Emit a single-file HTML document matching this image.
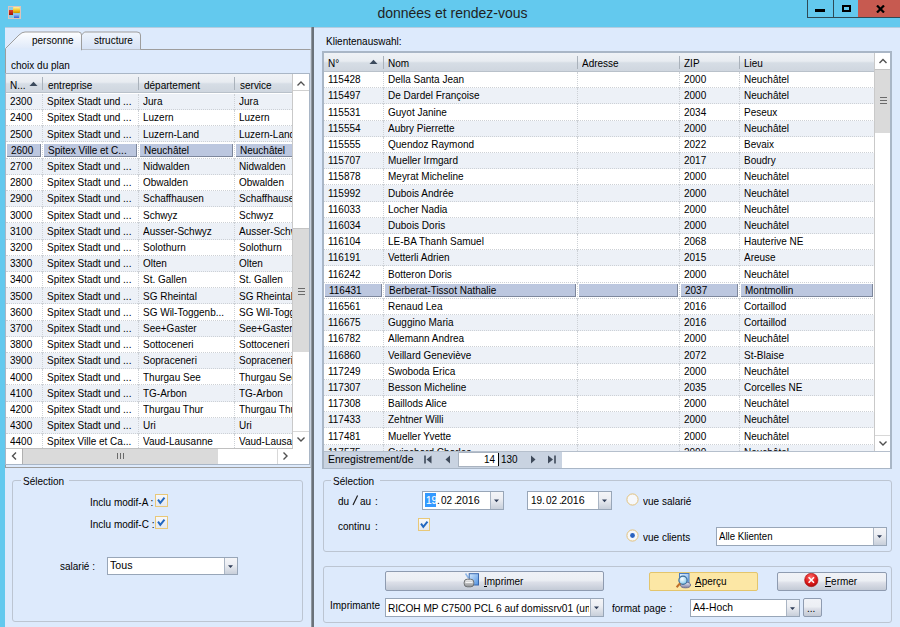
<!DOCTYPE html><html><head><meta charset="utf-8"><style>
html,body{margin:0;padding:0;width:900px;height:627px;overflow:hidden;background:#ddeafc}
#r{position:relative;width:900px;height:627px;overflow:hidden;font-family:"Liberation Sans", sans-serif;color:#000}
.tx{position:absolute;white-space:nowrap;line-height:1;transform:scaleX(0.893);transform-origin:0 0}
</style></head><body><div id="r"><div style="position:absolute;left:0px;top:0px;width:900px;height:27px;background:#63c9ee"></div><div style="position:absolute;left:0px;top:27px;width:5px;height:600px;background:#63c9ee"></div><div style="position:absolute;left:5px;top:27px;width:895px;height:600px;background:#ddeafc"></div><div style="position:absolute;left:5px;top:27px;width:895px;height:1px;background:#b4cde0"></div><div style="position:absolute;left:8px;top:6px;width:13px;height:13px;border:1px solid #dcc4bc;box-sizing:border-box;background:#86cdea"></div><div style="position:absolute;left:13px;top:6.5px;width:7px;height:6.5px;background:linear-gradient(#fff2a0,#f0c020 60%,#c89000);border-radius:1px"></div><div style="position:absolute;left:8.5px;top:10px;width:4px;height:5px;background:linear-gradient(#e04030,#a01000)"></div><div style="position:absolute;left:13.5px;top:14.2px;width:5px;height:3.6px;background:linear-gradient(#a8c8ff,#3060d0)"></div><div style="position:absolute;white-space:nowrap;line-height:1;left:0;width:905px;text-align:center;top:6px;font-size:14px;color:#1f1f1f">données et rendez-vous</div><div style="position:absolute;left:807px;top:0px;width:26px;height:18px;border-left:1px solid #2e4a55;border-bottom:1px solid #2e4a55;box-sizing:border-box;background:#63c9ee"></div><div style="position:absolute;left:833px;top:0px;width:25px;height:18px;border-left:1px solid #2e4a55;border-bottom:1px solid #2e4a55;box-sizing:border-box;background:#63c9ee"></div><div style="position:absolute;left:858px;top:0px;width:42px;height:18px;border-bottom:1px solid #2e4a55;box-sizing:border-box;background:#c75a50"></div><div style="position:absolute;left:815px;top:9.3px;width:10px;height:2.8px;background:#000"></div><div style="position:absolute;left:841.8px;top:4.8px;width:9.6px;height:7.4px;border:2px solid #000;border-top-width:2.6px;box-sizing:border-box"></div><svg style="position:absolute;left:876px;top:5px" width="9" height="8" viewBox="0 0 9 8"><path d="M1 0.5 L8 7.5 M8 0.5 L1 7.5" stroke="#000" stroke-width="2.2"/></svg><div style="position:absolute;left:5px;top:49px;width:306px;height:419px;border:1px solid #9d9d9d;border-right:1px solid #c8d2e0;box-sizing:border-box;background:#ddeafc"></div><svg style="position:absolute;left:0;top:27px" width="320" height="24" viewBox="0 27 320 24">
<defs><linearGradient id="ga" x1="0" y1="0" x2="0" y2="1"><stop offset="0" stop-color="#fdfeff"/><stop offset="1" stop-color="#dde8f9"/></linearGradient>
<linearGradient id="gb" x1="0" y1="0" x2="0" y2="1"><stop offset="0" stop-color="#eef4fd"/><stop offset="1" stop-color="#d6e2f5"/></linearGradient></defs>
<path d="M81.5 49.5 L81.5 35 L84.5 32 L137 32 Q140.5 32 140.5 35 L140.5 49.5" fill="url(#gb)" stroke="#9d9d9d" stroke-width="1"/>
<path d="M5.5 50 L5.5 48.5 L19 35 Q22 32 25 32 L78.5 32 Q81.5 32 81.5 35 L81.5 50 Z" fill="url(#ga)" stroke="#9d9d9d" stroke-width="1"/>
<rect x="6" y="48.6" width="75" height="3" fill="#ddeafc"/>
</svg><div class="tx" style="left:31.5px;top:34.52px;font-size:11.20px;">personne</div><div class="tx" style="left:94px;top:34.52px;font-size:11.20px;">structure</div><div class="tx" style="left:11px;top:59.82px;font-size:11.20px;">choix du plan</div><div style="position:absolute;left:5px;top:73px;width:305px;height:392px;border:1px solid #a9b6c6;box-sizing:border-box;background:#fff"></div><div style="position:absolute;left:6px;top:74px;width:286px;height:374px;overflow:hidden"><div style="position:absolute;left:0px;top:0px;width:286px;height:19px;background:linear-gradient(#eff2f6 0%,#e8ecf1 45%,#d6dde5 55%,#cfd6df 100%);border-bottom:1px solid #b9c1ca;box-sizing:border-box"></div><div style="position:absolute;left:36px;top:3px;width:1px;height:13px;background:#aab2bb"></div><div style="position:absolute;left:132px;top:3px;width:1px;height:13px;background:#aab2bb"></div><div style="position:absolute;left:228px;top:3px;width:1px;height:13px;background:#aab2bb"></div><div class="tx" style="left:4px;top:5.72px;font-size:11.20px;">N...</div><div class="tx" style="left:42px;top:5.72px;font-size:11.20px;">entreprise</div><div class="tx" style="left:137.5px;top:5.72px;font-size:11.20px;">département</div><div class="tx" style="left:233.5px;top:5.72px;font-size:11.20px;">service</div><svg style="position:absolute;left:23px;top:7px" width="9" height="6"><path d="M0.5 5 L4.5 0.8 L8.5 5 Z" fill="#3b4a5c"/></svg><div style="position:absolute;left:0px;top:19.799999999999997px;width:286px;height:16.2px;background:#edf1f7;border-bottom:1px dotted #cdd1d6;box-sizing:border-box"></div><div class="tx" style="left:4px;top:22.12px;font-size:11.20px;width:35.8px;overflow:hidden">2300</div><div style="position:absolute;left:36px;top:19.799999999999997px;width:0px;height:16.2px;border-left:1px dotted #cdd1d6"></div><div class="tx" style="left:41px;top:22.12px;font-size:11.20px;width:101.9px;overflow:hidden">Spitex Stadt und ...</div><div style="position:absolute;left:132px;top:19.799999999999997px;width:0px;height:16.2px;border-left:1px dotted #cdd1d6"></div><div class="tx" style="left:137px;top:22.12px;font-size:11.20px;width:101.9px;overflow:hidden">Jura</div><div style="position:absolute;left:228px;top:19.799999999999997px;width:0px;height:16.2px;border-left:1px dotted #cdd1d6"></div><div class="tx" style="left:233px;top:22.12px;font-size:11.20px;">Jura</div><div style="position:absolute;left:0px;top:36.0px;width:286px;height:16.2px;background:#fff;border-bottom:1px dotted #cdd1d6;box-sizing:border-box"></div><div class="tx" style="left:4px;top:38.32px;font-size:11.20px;width:35.8px;overflow:hidden">2400</div><div style="position:absolute;left:36px;top:36.0px;width:0px;height:16.2px;border-left:1px dotted #cdd1d6"></div><div class="tx" style="left:41px;top:38.32px;font-size:11.20px;width:101.9px;overflow:hidden">Spitex Stadt und ...</div><div style="position:absolute;left:132px;top:36.0px;width:0px;height:16.2px;border-left:1px dotted #cdd1d6"></div><div class="tx" style="left:137px;top:38.32px;font-size:11.20px;width:101.9px;overflow:hidden">Luzern</div><div style="position:absolute;left:228px;top:36.0px;width:0px;height:16.2px;border-left:1px dotted #cdd1d6"></div><div class="tx" style="left:233px;top:38.32px;font-size:11.20px;">Luzern</div><div style="position:absolute;left:0px;top:52.19999999999999px;width:286px;height:16.2px;background:#edf1f7;border-bottom:1px dotted #cdd1d6;box-sizing:border-box"></div><div class="tx" style="left:4px;top:54.52px;font-size:11.20px;width:35.8px;overflow:hidden">2500</div><div style="position:absolute;left:36px;top:52.19999999999999px;width:0px;height:16.2px;border-left:1px dotted #cdd1d6"></div><div class="tx" style="left:41px;top:54.52px;font-size:11.20px;width:101.9px;overflow:hidden">Spitex Stadt und ...</div><div style="position:absolute;left:132px;top:52.19999999999999px;width:0px;height:16.2px;border-left:1px dotted #cdd1d6"></div><div class="tx" style="left:137px;top:54.52px;font-size:11.20px;width:101.9px;overflow:hidden">Luzern-Land</div><div style="position:absolute;left:228px;top:52.19999999999999px;width:0px;height:16.2px;border-left:1px dotted #cdd1d6"></div><div class="tx" style="left:233px;top:54.52px;font-size:11.20px;">Luzern-Land</div><div style="position:absolute;left:0px;top:68.39999999999998px;width:286px;height:16.2px;background:#fff;border-bottom:1px dotted #cdd1d6;box-sizing:border-box"></div><div style="position:absolute;left:1px;top:69.59999999999998px;width:34px;height:13.2px;background:#bcc7df;border-right:1px solid #7d879c;border-bottom:1px solid #7d879c;box-sizing:border-box"></div><div style="position:absolute;left:38px;top:69.59999999999998px;width:93px;height:13.2px;background:#bcc7df;border-right:1px solid #7d879c;border-bottom:1px solid #7d879c;box-sizing:border-box"></div><div style="position:absolute;left:134px;top:69.59999999999998px;width:93px;height:13.2px;background:#bcc7df;border-right:1px solid #7d879c;border-bottom:1px solid #7d879c;box-sizing:border-box"></div><div style="position:absolute;left:230px;top:69.59999999999998px;width:61px;height:13.2px;background:#bcc7df;border-right:1px solid #7d879c;border-bottom:1px solid #7d879c;box-sizing:border-box"></div><div class="tx" style="left:5px;top:71.32px;font-size:11.20px;width:35.8px;overflow:hidden">2600</div><div style="position:absolute;left:36px;top:68.39999999999998px;width:0px;height:16.2px;border-left:1px dotted #cdd1d6"></div><div class="tx" style="left:42px;top:71.32px;font-size:11.20px;width:101.9px;overflow:hidden">Spitex Ville et C...</div><div style="position:absolute;left:132px;top:68.39999999999998px;width:0px;height:16.2px;border-left:1px dotted #cdd1d6"></div><div class="tx" style="left:138px;top:71.32px;font-size:11.20px;width:101.9px;overflow:hidden">Neuchâtel</div><div style="position:absolute;left:228px;top:68.39999999999998px;width:0px;height:16.2px;border-left:1px dotted #cdd1d6"></div><div class="tx" style="left:234px;top:71.32px;font-size:11.20px;">Neuchâtel</div><div style="position:absolute;left:0px;top:84.6px;width:286px;height:16.2px;background:#edf1f7;border-bottom:1px dotted #cdd1d6;box-sizing:border-box"></div><div class="tx" style="left:4px;top:86.92px;font-size:11.20px;width:35.8px;overflow:hidden">2700</div><div style="position:absolute;left:36px;top:84.6px;width:0px;height:16.2px;border-left:1px dotted #cdd1d6"></div><div class="tx" style="left:41px;top:86.92px;font-size:11.20px;width:101.9px;overflow:hidden">Spitex Stadt und ...</div><div style="position:absolute;left:132px;top:84.6px;width:0px;height:16.2px;border-left:1px dotted #cdd1d6"></div><div class="tx" style="left:137px;top:86.92px;font-size:11.20px;width:101.9px;overflow:hidden">Nidwalden</div><div style="position:absolute;left:228px;top:84.6px;width:0px;height:16.2px;border-left:1px dotted #cdd1d6"></div><div class="tx" style="left:233px;top:86.92px;font-size:11.20px;">Nidwalden</div><div style="position:absolute;left:0px;top:100.80000000000001px;width:286px;height:16.2px;background:#fff;border-bottom:1px dotted #cdd1d6;box-sizing:border-box"></div><div class="tx" style="left:4px;top:103.12px;font-size:11.20px;width:35.8px;overflow:hidden">2800</div><div style="position:absolute;left:36px;top:100.80000000000001px;width:0px;height:16.2px;border-left:1px dotted #cdd1d6"></div><div class="tx" style="left:41px;top:103.12px;font-size:11.20px;width:101.9px;overflow:hidden">Spitex Stadt und ...</div><div style="position:absolute;left:132px;top:100.80000000000001px;width:0px;height:16.2px;border-left:1px dotted #cdd1d6"></div><div class="tx" style="left:137px;top:103.12px;font-size:11.20px;width:101.9px;overflow:hidden">Obwalden</div><div style="position:absolute;left:228px;top:100.80000000000001px;width:0px;height:16.2px;border-left:1px dotted #cdd1d6"></div><div class="tx" style="left:233px;top:103.12px;font-size:11.20px;">Obwalden</div><div style="position:absolute;left:0px;top:117.0px;width:286px;height:16.2px;background:#edf1f7;border-bottom:1px dotted #cdd1d6;box-sizing:border-box"></div><div class="tx" style="left:4px;top:119.32px;font-size:11.20px;width:35.8px;overflow:hidden">2900</div><div style="position:absolute;left:36px;top:117.0px;width:0px;height:16.2px;border-left:1px dotted #cdd1d6"></div><div class="tx" style="left:41px;top:119.32px;font-size:11.20px;width:101.9px;overflow:hidden">Spitex Stadt und ...</div><div style="position:absolute;left:132px;top:117.0px;width:0px;height:16.2px;border-left:1px dotted #cdd1d6"></div><div class="tx" style="left:137px;top:119.32px;font-size:11.20px;width:101.9px;overflow:hidden">Schaffhausen</div><div style="position:absolute;left:228px;top:117.0px;width:0px;height:16.2px;border-left:1px dotted #cdd1d6"></div><div class="tx" style="left:233px;top:119.32px;font-size:11.20px;">Schaffhausen</div><div style="position:absolute;left:0px;top:133.2px;width:286px;height:16.2px;background:#fff;border-bottom:1px dotted #cdd1d6;box-sizing:border-box"></div><div class="tx" style="left:4px;top:135.52px;font-size:11.20px;width:35.8px;overflow:hidden">3000</div><div style="position:absolute;left:36px;top:133.2px;width:0px;height:16.2px;border-left:1px dotted #cdd1d6"></div><div class="tx" style="left:41px;top:135.52px;font-size:11.20px;width:101.9px;overflow:hidden">Spitex Stadt und ...</div><div style="position:absolute;left:132px;top:133.2px;width:0px;height:16.2px;border-left:1px dotted #cdd1d6"></div><div class="tx" style="left:137px;top:135.52px;font-size:11.20px;width:101.9px;overflow:hidden">Schwyz</div><div style="position:absolute;left:228px;top:133.2px;width:0px;height:16.2px;border-left:1px dotted #cdd1d6"></div><div class="tx" style="left:233px;top:135.52px;font-size:11.20px;">Schwyz</div><div style="position:absolute;left:0px;top:149.39999999999998px;width:286px;height:16.2px;background:#edf1f7;border-bottom:1px dotted #cdd1d6;box-sizing:border-box"></div><div class="tx" style="left:4px;top:151.72px;font-size:11.20px;width:35.8px;overflow:hidden">3100</div><div style="position:absolute;left:36px;top:149.39999999999998px;width:0px;height:16.2px;border-left:1px dotted #cdd1d6"></div><div class="tx" style="left:41px;top:151.72px;font-size:11.20px;width:101.9px;overflow:hidden">Spitex Stadt und ...</div><div style="position:absolute;left:132px;top:149.39999999999998px;width:0px;height:16.2px;border-left:1px dotted #cdd1d6"></div><div class="tx" style="left:137px;top:151.72px;font-size:11.20px;width:101.9px;overflow:hidden">Ausser-Schwyz</div><div style="position:absolute;left:228px;top:149.39999999999998px;width:0px;height:16.2px;border-left:1px dotted #cdd1d6"></div><div class="tx" style="left:233px;top:151.72px;font-size:11.20px;">Ausser-Schwyz</div><div style="position:absolute;left:0px;top:165.59999999999997px;width:286px;height:16.2px;background:#fff;border-bottom:1px dotted #cdd1d6;box-sizing:border-box"></div><div class="tx" style="left:4px;top:167.92px;font-size:11.20px;width:35.8px;overflow:hidden">3200</div><div style="position:absolute;left:36px;top:165.59999999999997px;width:0px;height:16.2px;border-left:1px dotted #cdd1d6"></div><div class="tx" style="left:41px;top:167.92px;font-size:11.20px;width:101.9px;overflow:hidden">Spitex Stadt und ...</div><div style="position:absolute;left:132px;top:165.59999999999997px;width:0px;height:16.2px;border-left:1px dotted #cdd1d6"></div><div class="tx" style="left:137px;top:167.92px;font-size:11.20px;width:101.9px;overflow:hidden">Solothurn</div><div style="position:absolute;left:228px;top:165.59999999999997px;width:0px;height:16.2px;border-left:1px dotted #cdd1d6"></div><div class="tx" style="left:233px;top:167.92px;font-size:11.20px;">Solothurn</div><div style="position:absolute;left:0px;top:181.8px;width:286px;height:16.2px;background:#edf1f7;border-bottom:1px dotted #cdd1d6;box-sizing:border-box"></div><div class="tx" style="left:4px;top:184.12px;font-size:11.20px;width:35.8px;overflow:hidden">3300</div><div style="position:absolute;left:36px;top:181.8px;width:0px;height:16.2px;border-left:1px dotted #cdd1d6"></div><div class="tx" style="left:41px;top:184.12px;font-size:11.20px;width:101.9px;overflow:hidden">Spitex Stadt und ...</div><div style="position:absolute;left:132px;top:181.8px;width:0px;height:16.2px;border-left:1px dotted #cdd1d6"></div><div class="tx" style="left:137px;top:184.12px;font-size:11.20px;width:101.9px;overflow:hidden">Olten</div><div style="position:absolute;left:228px;top:181.8px;width:0px;height:16.2px;border-left:1px dotted #cdd1d6"></div><div class="tx" style="left:233px;top:184.12px;font-size:11.20px;">Olten</div><div style="position:absolute;left:0px;top:198.0px;width:286px;height:16.2px;background:#fff;border-bottom:1px dotted #cdd1d6;box-sizing:border-box"></div><div class="tx" style="left:4px;top:200.32px;font-size:11.20px;width:35.8px;overflow:hidden">3400</div><div style="position:absolute;left:36px;top:198.0px;width:0px;height:16.2px;border-left:1px dotted #cdd1d6"></div><div class="tx" style="left:41px;top:200.32px;font-size:11.20px;width:101.9px;overflow:hidden">Spitex Stadt und ...</div><div style="position:absolute;left:132px;top:198.0px;width:0px;height:16.2px;border-left:1px dotted #cdd1d6"></div><div class="tx" style="left:137px;top:200.32px;font-size:11.20px;width:101.9px;overflow:hidden">St. Gallen</div><div style="position:absolute;left:228px;top:198.0px;width:0px;height:16.2px;border-left:1px dotted #cdd1d6"></div><div class="tx" style="left:233px;top:200.32px;font-size:11.20px;">St. Gallen</div><div style="position:absolute;left:0px;top:214.2px;width:286px;height:16.2px;background:#edf1f7;border-bottom:1px dotted #cdd1d6;box-sizing:border-box"></div><div class="tx" style="left:4px;top:216.52px;font-size:11.20px;width:35.8px;overflow:hidden">3500</div><div style="position:absolute;left:36px;top:214.2px;width:0px;height:16.2px;border-left:1px dotted #cdd1d6"></div><div class="tx" style="left:41px;top:216.52px;font-size:11.20px;width:101.9px;overflow:hidden">Spitex Stadt und ...</div><div style="position:absolute;left:132px;top:214.2px;width:0px;height:16.2px;border-left:1px dotted #cdd1d6"></div><div class="tx" style="left:137px;top:216.52px;font-size:11.20px;width:101.9px;overflow:hidden">SG Rheintal</div><div style="position:absolute;left:228px;top:214.2px;width:0px;height:16.2px;border-left:1px dotted #cdd1d6"></div><div class="tx" style="left:233px;top:216.52px;font-size:11.20px;">SG Rheintal</div><div style="position:absolute;left:0px;top:230.39999999999998px;width:286px;height:16.2px;background:#fff;border-bottom:1px dotted #cdd1d6;box-sizing:border-box"></div><div class="tx" style="left:4px;top:232.72px;font-size:11.20px;width:35.8px;overflow:hidden">3600</div><div style="position:absolute;left:36px;top:230.39999999999998px;width:0px;height:16.2px;border-left:1px dotted #cdd1d6"></div><div class="tx" style="left:41px;top:232.72px;font-size:11.20px;width:101.9px;overflow:hidden">Spitex Stadt und ...</div><div style="position:absolute;left:132px;top:230.39999999999998px;width:0px;height:16.2px;border-left:1px dotted #cdd1d6"></div><div class="tx" style="left:137px;top:232.72px;font-size:11.20px;width:101.9px;overflow:hidden">SG Wil-Toggenb...</div><div style="position:absolute;left:228px;top:230.39999999999998px;width:0px;height:16.2px;border-left:1px dotted #cdd1d6"></div><div class="tx" style="left:233px;top:232.72px;font-size:11.20px;">SG Wil-Toggenburg</div><div style="position:absolute;left:0px;top:246.59999999999997px;width:286px;height:16.2px;background:#edf1f7;border-bottom:1px dotted #cdd1d6;box-sizing:border-box"></div><div class="tx" style="left:4px;top:248.92px;font-size:11.20px;width:35.8px;overflow:hidden">3700</div><div style="position:absolute;left:36px;top:246.59999999999997px;width:0px;height:16.2px;border-left:1px dotted #cdd1d6"></div><div class="tx" style="left:41px;top:248.92px;font-size:11.20px;width:101.9px;overflow:hidden">Spitex Stadt und ...</div><div style="position:absolute;left:132px;top:246.59999999999997px;width:0px;height:16.2px;border-left:1px dotted #cdd1d6"></div><div class="tx" style="left:137px;top:248.92px;font-size:11.20px;width:101.9px;overflow:hidden">See+Gaster</div><div style="position:absolute;left:228px;top:246.59999999999997px;width:0px;height:16.2px;border-left:1px dotted #cdd1d6"></div><div class="tx" style="left:233px;top:248.92px;font-size:11.20px;">See+Gaster</div><div style="position:absolute;left:0px;top:262.8px;width:286px;height:16.2px;background:#fff;border-bottom:1px dotted #cdd1d6;box-sizing:border-box"></div><div class="tx" style="left:4px;top:265.12px;font-size:11.20px;width:35.8px;overflow:hidden">3800</div><div style="position:absolute;left:36px;top:262.8px;width:0px;height:16.2px;border-left:1px dotted #cdd1d6"></div><div class="tx" style="left:41px;top:265.12px;font-size:11.20px;width:101.9px;overflow:hidden">Spitex Stadt und ...</div><div style="position:absolute;left:132px;top:262.8px;width:0px;height:16.2px;border-left:1px dotted #cdd1d6"></div><div class="tx" style="left:137px;top:265.12px;font-size:11.20px;width:101.9px;overflow:hidden">Sottoceneri</div><div style="position:absolute;left:228px;top:262.8px;width:0px;height:16.2px;border-left:1px dotted #cdd1d6"></div><div class="tx" style="left:233px;top:265.12px;font-size:11.20px;">Sottoceneri</div><div style="position:absolute;left:0px;top:279.0px;width:286px;height:16.2px;background:#edf1f7;border-bottom:1px dotted #cdd1d6;box-sizing:border-box"></div><div class="tx" style="left:4px;top:281.32px;font-size:11.20px;width:35.8px;overflow:hidden">3900</div><div style="position:absolute;left:36px;top:279.0px;width:0px;height:16.2px;border-left:1px dotted #cdd1d6"></div><div class="tx" style="left:41px;top:281.32px;font-size:11.20px;width:101.9px;overflow:hidden">Spitex Stadt und ...</div><div style="position:absolute;left:132px;top:279.0px;width:0px;height:16.2px;border-left:1px dotted #cdd1d6"></div><div class="tx" style="left:137px;top:281.32px;font-size:11.20px;width:101.9px;overflow:hidden">Sopraceneri</div><div style="position:absolute;left:228px;top:279.0px;width:0px;height:16.2px;border-left:1px dotted #cdd1d6"></div><div class="tx" style="left:233px;top:281.32px;font-size:11.20px;">Sopraceneri</div><div style="position:absolute;left:0px;top:295.2px;width:286px;height:16.2px;background:#fff;border-bottom:1px dotted #cdd1d6;box-sizing:border-box"></div><div class="tx" style="left:4px;top:297.52px;font-size:11.20px;width:35.8px;overflow:hidden">4000</div><div style="position:absolute;left:36px;top:295.2px;width:0px;height:16.2px;border-left:1px dotted #cdd1d6"></div><div class="tx" style="left:41px;top:297.52px;font-size:11.20px;width:101.9px;overflow:hidden">Spitex Stadt und ...</div><div style="position:absolute;left:132px;top:295.2px;width:0px;height:16.2px;border-left:1px dotted #cdd1d6"></div><div class="tx" style="left:137px;top:297.52px;font-size:11.20px;width:101.9px;overflow:hidden">Thurgau See</div><div style="position:absolute;left:228px;top:295.2px;width:0px;height:16.2px;border-left:1px dotted #cdd1d6"></div><div class="tx" style="left:233px;top:297.52px;font-size:11.20px;">Thurgau See</div><div style="position:absolute;left:0px;top:311.4px;width:286px;height:16.2px;background:#edf1f7;border-bottom:1px dotted #cdd1d6;box-sizing:border-box"></div><div class="tx" style="left:4px;top:313.72px;font-size:11.20px;width:35.8px;overflow:hidden">4100</div><div style="position:absolute;left:36px;top:311.4px;width:0px;height:16.2px;border-left:1px dotted #cdd1d6"></div><div class="tx" style="left:41px;top:313.72px;font-size:11.20px;width:101.9px;overflow:hidden">Spitex Stadt und ...</div><div style="position:absolute;left:132px;top:311.4px;width:0px;height:16.2px;border-left:1px dotted #cdd1d6"></div><div class="tx" style="left:137px;top:313.72px;font-size:11.20px;width:101.9px;overflow:hidden">TG-Arbon</div><div style="position:absolute;left:228px;top:311.4px;width:0px;height:16.2px;border-left:1px dotted #cdd1d6"></div><div class="tx" style="left:233px;top:313.72px;font-size:11.20px;">TG-Arbon</div><div style="position:absolute;left:0px;top:327.6px;width:286px;height:16.2px;background:#fff;border-bottom:1px dotted #cdd1d6;box-sizing:border-box"></div><div class="tx" style="left:4px;top:329.92px;font-size:11.20px;width:35.8px;overflow:hidden">4200</div><div style="position:absolute;left:36px;top:327.6px;width:0px;height:16.2px;border-left:1px dotted #cdd1d6"></div><div class="tx" style="left:41px;top:329.92px;font-size:11.20px;width:101.9px;overflow:hidden">Spitex Stadt und ...</div><div style="position:absolute;left:132px;top:327.6px;width:0px;height:16.2px;border-left:1px dotted #cdd1d6"></div><div class="tx" style="left:137px;top:329.92px;font-size:11.20px;width:101.9px;overflow:hidden">Thurgau Thur</div><div style="position:absolute;left:228px;top:327.6px;width:0px;height:16.2px;border-left:1px dotted #cdd1d6"></div><div class="tx" style="left:233px;top:329.92px;font-size:11.20px;">Thurgau Thur</div><div style="position:absolute;left:0px;top:343.8px;width:286px;height:16.2px;background:#edf1f7;border-bottom:1px dotted #cdd1d6;box-sizing:border-box"></div><div class="tx" style="left:4px;top:346.12px;font-size:11.20px;width:35.8px;overflow:hidden">4300</div><div style="position:absolute;left:36px;top:343.8px;width:0px;height:16.2px;border-left:1px dotted #cdd1d6"></div><div class="tx" style="left:41px;top:346.12px;font-size:11.20px;width:101.9px;overflow:hidden">Spitex Stadt und ...</div><div style="position:absolute;left:132px;top:343.8px;width:0px;height:16.2px;border-left:1px dotted #cdd1d6"></div><div class="tx" style="left:137px;top:346.12px;font-size:11.20px;width:101.9px;overflow:hidden">Uri</div><div style="position:absolute;left:228px;top:343.8px;width:0px;height:16.2px;border-left:1px dotted #cdd1d6"></div><div class="tx" style="left:233px;top:346.12px;font-size:11.20px;">Uri</div><div style="position:absolute;left:0px;top:360.0px;width:286px;height:16.2px;background:#fff;border-bottom:1px dotted #cdd1d6;box-sizing:border-box"></div><div class="tx" style="left:4px;top:362.32px;font-size:11.20px;width:35.8px;overflow:hidden">4400</div><div style="position:absolute;left:36px;top:360.0px;width:0px;height:16.2px;border-left:1px dotted #cdd1d6"></div><div class="tx" style="left:41px;top:362.32px;font-size:11.20px;width:101.9px;overflow:hidden">Spitex Ville et Ca...</div><div style="position:absolute;left:132px;top:360.0px;width:0px;height:16.2px;border-left:1px dotted #cdd1d6"></div><div class="tx" style="left:137px;top:362.32px;font-size:11.20px;width:101.9px;overflow:hidden">Vaud-Lausanne</div><div style="position:absolute;left:228px;top:360.0px;width:0px;height:16.2px;border-left:1px dotted #cdd1d6"></div><div class="tx" style="left:233px;top:362.32px;font-size:11.20px;">Vaud-Lausanne</div></div><div style="position:absolute;left:292px;top:74px;width:17px;height:374px;background:#fff;border-left:1px solid #c9c9c9;box-sizing:border-box"></div><div style="position:absolute;left:293px;top:228px;width:16px;height:124px;background:#dadada;border-top:1px solid #c4c4c4;box-sizing:border-box"></div><div style="position:absolute;left:293px;top:74px;width:16px;height:17px;border-bottom:1px solid #d0d0d0;box-sizing:border-box"></div><svg style="position:absolute;left:293px;top:74px" width="16" height="17"><path d="M4.5 11.5 L8 8 L11.5 11.5" fill="none" stroke="#505050" stroke-width="1.3"/></svg><svg style="position:absolute;left:293px;top:431px" width="16" height="17"><path d="M4.5 6.5 L8 10 L11.5 6.5" fill="none" stroke="#505050" stroke-width="1.4"/></svg><div style="position:absolute;left:293px;top:431px;width:16px;height:1px;background:#d8d8d8"></div><div style="position:absolute;left:298px;top:287.5px;width:7px;height:1.6px;background:#6a6a6a"></div><div style="position:absolute;left:298px;top:290.5px;width:7px;height:1.6px;background:#6a6a6a"></div><div style="position:absolute;left:298px;top:293.5px;width:7px;height:1.6px;background:#6a6a6a"></div><div style="position:absolute;left:6px;top:448px;width:287px;height:16px;background:#fff;border-top:1px solid #c0c0c0;box-sizing:border-box"></div><div style="position:absolute;left:22px;top:449px;width:196px;height:15px;background:#dadada"></div><svg style="position:absolute;left:6px;top:448px" width="16" height="16"><path d="M10 4.5 L6.5 8 L10 11.5" fill="none" stroke="#505050" stroke-width="1.4"/></svg><svg style="position:absolute;left:277px;top:448px" width="16" height="16"><path d="M6.5 4.5 L10 8 L6.5 11.5" fill="none" stroke="#505050" stroke-width="1.4"/></svg><div style="position:absolute;left:21.5px;top:448px;width:1.2px;height:16px;background:#b0b0b0"></div><div style="position:absolute;left:277px;top:448px;width:1px;height:16px;background:#d8d8d8"></div><div style="position:absolute;left:116.5px;top:452.5px;width:1.6px;height:6.5px;background:#6a6a6a"></div><div style="position:absolute;left:119.5px;top:452.5px;width:1.6px;height:6.5px;background:#6a6a6a"></div><div style="position:absolute;left:122.5px;top:452.5px;width:1.6px;height:6.5px;background:#6a6a6a"></div><div class="tx" style="left:325.5px;top:36.32px;font-size:11.20px;">Klientenauswahl:</div><div style="position:absolute;left:322px;top:51px;width:570px;height:418px;border:1px solid #a9b6c6;border-left:2px solid #a9b6c6;border-top:2px solid #a9b6c6;border-right:2px solid #a9b6c6;box-sizing:border-box;background:#fff"></div><div style="position:absolute;left:324px;top:53px;width:550px;height:398px;overflow:hidden"><div style="position:absolute;left:0px;top:0px;width:550px;height:19px;background:linear-gradient(#eff2f6 0%,#e8ecf1 45%,#d6dde5 55%,#cfd6df 100%);border-bottom:1px solid #b9c1ca;box-sizing:border-box"></div><div style="position:absolute;left:59px;top:3px;width:1px;height:13px;background:#aab2bb"></div><div style="position:absolute;left:253px;top:3px;width:1px;height:13px;background:#aab2bb"></div><div style="position:absolute;left:355px;top:3px;width:1px;height:13px;background:#aab2bb"></div><div style="position:absolute;left:415px;top:3px;width:1px;height:13px;background:#aab2bb"></div><div class="tx" style="left:4px;top:4.72px;font-size:11.20px;">N°</div><div class="tx" style="left:64px;top:4.72px;font-size:11.20px;">Nom</div><div class="tx" style="left:258px;top:4.72px;font-size:11.20px;">Adresse</div><div class="tx" style="left:360px;top:4.72px;font-size:11.20px;">ZIP</div><div class="tx" style="left:420px;top:4.72px;font-size:11.20px;">Lieu</div><svg style="position:absolute;left:45px;top:6.399999999999999px" width="9" height="6"><path d="M0.5 5 L4.5 0.8 L8.5 5 Z" fill="#3b4a5c"/></svg><div style="position:absolute;left:0px;top:19.0px;width:551px;height:16.2px;background:#fff;border-bottom:1px dotted #cdd1d6;box-sizing:border-box"></div><div class="tx" style="left:4px;top:21.12px;font-size:11.20px;width:61.6px;overflow:hidden">115428</div><div style="position:absolute;left:59px;top:19.0px;width:0px;height:16.2px;border-left:1px dotted #cdd1d6"></div><div class="tx" style="left:64px;top:21.12px;font-size:11.20px;width:211.6px;overflow:hidden">Della Santa Jean</div><div style="position:absolute;left:253px;top:19.0px;width:0px;height:16.2px;border-left:1px dotted #cdd1d6"></div><div style="position:absolute;left:355px;top:19.0px;width:0px;height:16.2px;border-left:1px dotted #cdd1d6"></div><div class="tx" style="left:360px;top:21.12px;font-size:11.20px;width:61.6px;overflow:hidden">2000</div><div style="position:absolute;left:415px;top:19.0px;width:0px;height:16.2px;border-left:1px dotted #cdd1d6"></div><div class="tx" style="left:420px;top:21.12px;font-size:11.20px;width:145.6px;overflow:hidden">Neuchâtel</div><div style="position:absolute;left:0px;top:35.2px;width:551px;height:16.2px;background:#edf1f7;border-bottom:1px dotted #cdd1d6;box-sizing:border-box"></div><div class="tx" style="left:4px;top:37.32px;font-size:11.20px;width:61.6px;overflow:hidden">115497</div><div style="position:absolute;left:59px;top:35.2px;width:0px;height:16.2px;border-left:1px dotted #cdd1d6"></div><div class="tx" style="left:64px;top:37.32px;font-size:11.20px;width:211.6px;overflow:hidden">De Dardel Françoise</div><div style="position:absolute;left:253px;top:35.2px;width:0px;height:16.2px;border-left:1px dotted #cdd1d6"></div><div style="position:absolute;left:355px;top:35.2px;width:0px;height:16.2px;border-left:1px dotted #cdd1d6"></div><div class="tx" style="left:360px;top:37.32px;font-size:11.20px;width:61.6px;overflow:hidden">2000</div><div style="position:absolute;left:415px;top:35.2px;width:0px;height:16.2px;border-left:1px dotted #cdd1d6"></div><div class="tx" style="left:420px;top:37.32px;font-size:11.20px;width:145.6px;overflow:hidden">Neuchâtel</div><div style="position:absolute;left:0px;top:51.400000000000006px;width:551px;height:16.2px;background:#fff;border-bottom:1px dotted #cdd1d6;box-sizing:border-box"></div><div class="tx" style="left:4px;top:53.52px;font-size:11.20px;width:61.6px;overflow:hidden">115531</div><div style="position:absolute;left:59px;top:51.400000000000006px;width:0px;height:16.2px;border-left:1px dotted #cdd1d6"></div><div class="tx" style="left:64px;top:53.52px;font-size:11.20px;width:211.6px;overflow:hidden">Guyot Janine</div><div style="position:absolute;left:253px;top:51.400000000000006px;width:0px;height:16.2px;border-left:1px dotted #cdd1d6"></div><div style="position:absolute;left:355px;top:51.400000000000006px;width:0px;height:16.2px;border-left:1px dotted #cdd1d6"></div><div class="tx" style="left:360px;top:53.52px;font-size:11.20px;width:61.6px;overflow:hidden">2034</div><div style="position:absolute;left:415px;top:51.400000000000006px;width:0px;height:16.2px;border-left:1px dotted #cdd1d6"></div><div class="tx" style="left:420px;top:53.52px;font-size:11.20px;width:145.6px;overflow:hidden">Peseux</div><div style="position:absolute;left:0px;top:67.6px;width:551px;height:16.2px;background:#edf1f7;border-bottom:1px dotted #cdd1d6;box-sizing:border-box"></div><div class="tx" style="left:4px;top:69.72px;font-size:11.20px;width:61.6px;overflow:hidden">115554</div><div style="position:absolute;left:59px;top:67.6px;width:0px;height:16.2px;border-left:1px dotted #cdd1d6"></div><div class="tx" style="left:64px;top:69.72px;font-size:11.20px;width:211.6px;overflow:hidden">Aubry Pierrette</div><div style="position:absolute;left:253px;top:67.6px;width:0px;height:16.2px;border-left:1px dotted #cdd1d6"></div><div style="position:absolute;left:355px;top:67.6px;width:0px;height:16.2px;border-left:1px dotted #cdd1d6"></div><div class="tx" style="left:360px;top:69.72px;font-size:11.20px;width:61.6px;overflow:hidden">2000</div><div style="position:absolute;left:415px;top:67.6px;width:0px;height:16.2px;border-left:1px dotted #cdd1d6"></div><div class="tx" style="left:420px;top:69.72px;font-size:11.20px;width:145.6px;overflow:hidden">Neuchâtel</div><div style="position:absolute;left:0px;top:83.80000000000001px;width:551px;height:16.2px;background:#fff;border-bottom:1px dotted #cdd1d6;box-sizing:border-box"></div><div class="tx" style="left:4px;top:85.92px;font-size:11.20px;width:61.6px;overflow:hidden">115555</div><div style="position:absolute;left:59px;top:83.80000000000001px;width:0px;height:16.2px;border-left:1px dotted #cdd1d6"></div><div class="tx" style="left:64px;top:85.92px;font-size:11.20px;width:211.6px;overflow:hidden">Quendoz Raymond</div><div style="position:absolute;left:253px;top:83.80000000000001px;width:0px;height:16.2px;border-left:1px dotted #cdd1d6"></div><div style="position:absolute;left:355px;top:83.80000000000001px;width:0px;height:16.2px;border-left:1px dotted #cdd1d6"></div><div class="tx" style="left:360px;top:85.92px;font-size:11.20px;width:61.6px;overflow:hidden">2022</div><div style="position:absolute;left:415px;top:83.80000000000001px;width:0px;height:16.2px;border-left:1px dotted #cdd1d6"></div><div class="tx" style="left:420px;top:85.92px;font-size:11.20px;width:145.6px;overflow:hidden">Bevaix</div><div style="position:absolute;left:0px;top:100.0px;width:551px;height:16.2px;background:#edf1f7;border-bottom:1px dotted #cdd1d6;box-sizing:border-box"></div><div class="tx" style="left:4px;top:102.12px;font-size:11.20px;width:61.6px;overflow:hidden">115707</div><div style="position:absolute;left:59px;top:100.0px;width:0px;height:16.2px;border-left:1px dotted #cdd1d6"></div><div class="tx" style="left:64px;top:102.12px;font-size:11.20px;width:211.6px;overflow:hidden">Mueller Irmgard</div><div style="position:absolute;left:253px;top:100.0px;width:0px;height:16.2px;border-left:1px dotted #cdd1d6"></div><div style="position:absolute;left:355px;top:100.0px;width:0px;height:16.2px;border-left:1px dotted #cdd1d6"></div><div class="tx" style="left:360px;top:102.12px;font-size:11.20px;width:61.6px;overflow:hidden">2017</div><div style="position:absolute;left:415px;top:100.0px;width:0px;height:16.2px;border-left:1px dotted #cdd1d6"></div><div class="tx" style="left:420px;top:102.12px;font-size:11.20px;width:145.6px;overflow:hidden">Boudry</div><div style="position:absolute;left:0px;top:116.19999999999999px;width:551px;height:16.2px;background:#fff;border-bottom:1px dotted #cdd1d6;box-sizing:border-box"></div><div class="tx" style="left:4px;top:118.32px;font-size:11.20px;width:61.6px;overflow:hidden">115878</div><div style="position:absolute;left:59px;top:116.19999999999999px;width:0px;height:16.2px;border-left:1px dotted #cdd1d6"></div><div class="tx" style="left:64px;top:118.32px;font-size:11.20px;width:211.6px;overflow:hidden">Meyrat Micheline</div><div style="position:absolute;left:253px;top:116.19999999999999px;width:0px;height:16.2px;border-left:1px dotted #cdd1d6"></div><div style="position:absolute;left:355px;top:116.19999999999999px;width:0px;height:16.2px;border-left:1px dotted #cdd1d6"></div><div class="tx" style="left:360px;top:118.32px;font-size:11.20px;width:61.6px;overflow:hidden">2000</div><div style="position:absolute;left:415px;top:116.19999999999999px;width:0px;height:16.2px;border-left:1px dotted #cdd1d6"></div><div class="tx" style="left:420px;top:118.32px;font-size:11.20px;width:145.6px;overflow:hidden">Neuchâtel</div><div style="position:absolute;left:0px;top:132.39999999999998px;width:551px;height:16.2px;background:#edf1f7;border-bottom:1px dotted #cdd1d6;box-sizing:border-box"></div><div class="tx" style="left:4px;top:134.52px;font-size:11.20px;width:61.6px;overflow:hidden">115992</div><div style="position:absolute;left:59px;top:132.39999999999998px;width:0px;height:16.2px;border-left:1px dotted #cdd1d6"></div><div class="tx" style="left:64px;top:134.52px;font-size:11.20px;width:211.6px;overflow:hidden">Dubois Andrée</div><div style="position:absolute;left:253px;top:132.39999999999998px;width:0px;height:16.2px;border-left:1px dotted #cdd1d6"></div><div style="position:absolute;left:355px;top:132.39999999999998px;width:0px;height:16.2px;border-left:1px dotted #cdd1d6"></div><div class="tx" style="left:360px;top:134.52px;font-size:11.20px;width:61.6px;overflow:hidden">2000</div><div style="position:absolute;left:415px;top:132.39999999999998px;width:0px;height:16.2px;border-left:1px dotted #cdd1d6"></div><div class="tx" style="left:420px;top:134.52px;font-size:11.20px;width:145.6px;overflow:hidden">Neuchâtel</div><div style="position:absolute;left:0px;top:148.6px;width:551px;height:16.2px;background:#fff;border-bottom:1px dotted #cdd1d6;box-sizing:border-box"></div><div class="tx" style="left:4px;top:150.72px;font-size:11.20px;width:61.6px;overflow:hidden">116033</div><div style="position:absolute;left:59px;top:148.6px;width:0px;height:16.2px;border-left:1px dotted #cdd1d6"></div><div class="tx" style="left:64px;top:150.72px;font-size:11.20px;width:211.6px;overflow:hidden">Locher Nadia</div><div style="position:absolute;left:253px;top:148.6px;width:0px;height:16.2px;border-left:1px dotted #cdd1d6"></div><div style="position:absolute;left:355px;top:148.6px;width:0px;height:16.2px;border-left:1px dotted #cdd1d6"></div><div class="tx" style="left:360px;top:150.72px;font-size:11.20px;width:61.6px;overflow:hidden">2000</div><div style="position:absolute;left:415px;top:148.6px;width:0px;height:16.2px;border-left:1px dotted #cdd1d6"></div><div class="tx" style="left:420px;top:150.72px;font-size:11.20px;width:145.6px;overflow:hidden">Neuchâtel</div><div style="position:absolute;left:0px;top:164.79999999999998px;width:551px;height:16.2px;background:#edf1f7;border-bottom:1px dotted #cdd1d6;box-sizing:border-box"></div><div class="tx" style="left:4px;top:166.92px;font-size:11.20px;width:61.6px;overflow:hidden">116034</div><div style="position:absolute;left:59px;top:164.79999999999998px;width:0px;height:16.2px;border-left:1px dotted #cdd1d6"></div><div class="tx" style="left:64px;top:166.92px;font-size:11.20px;width:211.6px;overflow:hidden">Dubois Doris</div><div style="position:absolute;left:253px;top:164.79999999999998px;width:0px;height:16.2px;border-left:1px dotted #cdd1d6"></div><div style="position:absolute;left:355px;top:164.79999999999998px;width:0px;height:16.2px;border-left:1px dotted #cdd1d6"></div><div class="tx" style="left:360px;top:166.92px;font-size:11.20px;width:61.6px;overflow:hidden">2000</div><div style="position:absolute;left:415px;top:164.79999999999998px;width:0px;height:16.2px;border-left:1px dotted #cdd1d6"></div><div class="tx" style="left:420px;top:166.92px;font-size:11.20px;width:145.6px;overflow:hidden">Neuchâtel</div><div style="position:absolute;left:0px;top:181.0px;width:551px;height:16.2px;background:#fff;border-bottom:1px dotted #cdd1d6;box-sizing:border-box"></div><div class="tx" style="left:4px;top:183.12px;font-size:11.20px;width:61.6px;overflow:hidden">116104</div><div style="position:absolute;left:59px;top:181.0px;width:0px;height:16.2px;border-left:1px dotted #cdd1d6"></div><div class="tx" style="left:64px;top:183.12px;font-size:11.20px;width:211.6px;overflow:hidden">LE-BA Thanh Samuel</div><div style="position:absolute;left:253px;top:181.0px;width:0px;height:16.2px;border-left:1px dotted #cdd1d6"></div><div style="position:absolute;left:355px;top:181.0px;width:0px;height:16.2px;border-left:1px dotted #cdd1d6"></div><div class="tx" style="left:360px;top:183.12px;font-size:11.20px;width:61.6px;overflow:hidden">2068</div><div style="position:absolute;left:415px;top:181.0px;width:0px;height:16.2px;border-left:1px dotted #cdd1d6"></div><div class="tx" style="left:420px;top:183.12px;font-size:11.20px;width:145.6px;overflow:hidden">Hauterive NE</div><div style="position:absolute;left:0px;top:197.2px;width:551px;height:16.2px;background:#edf1f7;border-bottom:1px dotted #cdd1d6;box-sizing:border-box"></div><div class="tx" style="left:4px;top:199.32px;font-size:11.20px;width:61.6px;overflow:hidden">116191</div><div style="position:absolute;left:59px;top:197.2px;width:0px;height:16.2px;border-left:1px dotted #cdd1d6"></div><div class="tx" style="left:64px;top:199.32px;font-size:11.20px;width:211.6px;overflow:hidden">Vetterli Adrien</div><div style="position:absolute;left:253px;top:197.2px;width:0px;height:16.2px;border-left:1px dotted #cdd1d6"></div><div style="position:absolute;left:355px;top:197.2px;width:0px;height:16.2px;border-left:1px dotted #cdd1d6"></div><div class="tx" style="left:360px;top:199.32px;font-size:11.20px;width:61.6px;overflow:hidden">2015</div><div style="position:absolute;left:415px;top:197.2px;width:0px;height:16.2px;border-left:1px dotted #cdd1d6"></div><div class="tx" style="left:420px;top:199.32px;font-size:11.20px;width:145.6px;overflow:hidden">Areuse</div><div style="position:absolute;left:0px;top:213.39999999999998px;width:551px;height:16.2px;background:#fff;border-bottom:1px dotted #cdd1d6;box-sizing:border-box"></div><div class="tx" style="left:4px;top:215.52px;font-size:11.20px;width:61.6px;overflow:hidden">116242</div><div style="position:absolute;left:59px;top:213.39999999999998px;width:0px;height:16.2px;border-left:1px dotted #cdd1d6"></div><div class="tx" style="left:64px;top:215.52px;font-size:11.20px;width:211.6px;overflow:hidden">Botteron Doris</div><div style="position:absolute;left:253px;top:213.39999999999998px;width:0px;height:16.2px;border-left:1px dotted #cdd1d6"></div><div style="position:absolute;left:355px;top:213.39999999999998px;width:0px;height:16.2px;border-left:1px dotted #cdd1d6"></div><div class="tx" style="left:360px;top:215.52px;font-size:11.20px;width:61.6px;overflow:hidden">2000</div><div style="position:absolute;left:415px;top:213.39999999999998px;width:0px;height:16.2px;border-left:1px dotted #cdd1d6"></div><div class="tx" style="left:420px;top:215.52px;font-size:11.20px;width:145.6px;overflow:hidden">Neuchâtel</div><div style="position:absolute;left:0px;top:229.60000000000002px;width:551px;height:16.2px;background:#fff;border-bottom:1px dotted #cdd1d6;box-sizing:border-box"></div><div style="position:absolute;left:1px;top:230.8px;width:57px;height:13.2px;background:#bcc7df;border-right:1px solid #7d879c;border-bottom:1px solid #7d879c;box-sizing:border-box"></div><div style="position:absolute;left:61px;top:230.8px;width:191px;height:13.2px;background:#bcc7df;border-right:1px solid #7d879c;border-bottom:1px solid #7d879c;box-sizing:border-box"></div><div style="position:absolute;left:255px;top:230.8px;width:99px;height:13.2px;background:#bcc7df;border-right:1px solid #7d879c;border-bottom:1px solid #7d879c;box-sizing:border-box"></div><div style="position:absolute;left:357px;top:230.8px;width:57px;height:13.2px;background:#bcc7df;border-right:1px solid #7d879c;border-bottom:1px solid #7d879c;box-sizing:border-box"></div><div style="position:absolute;left:417px;top:230.8px;width:132px;height:13.2px;background:#bcc7df;border-right:1px solid #7d879c;border-bottom:1px solid #7d879c;box-sizing:border-box"></div><div class="tx" style="left:5px;top:232.32px;font-size:11.20px;width:61.6px;overflow:hidden">116431</div><div style="position:absolute;left:59px;top:229.60000000000002px;width:0px;height:16.2px;border-left:1px dotted #cdd1d6"></div><div class="tx" style="left:65px;top:232.32px;font-size:11.20px;width:211.6px;overflow:hidden">Berberat-Tissot Nathalie</div><div style="position:absolute;left:253px;top:229.60000000000002px;width:0px;height:16.2px;border-left:1px dotted #cdd1d6"></div><div style="position:absolute;left:355px;top:229.60000000000002px;width:0px;height:16.2px;border-left:1px dotted #cdd1d6"></div><div class="tx" style="left:361px;top:232.32px;font-size:11.20px;width:61.6px;overflow:hidden">2037</div><div style="position:absolute;left:415px;top:229.60000000000002px;width:0px;height:16.2px;border-left:1px dotted #cdd1d6"></div><div class="tx" style="left:421px;top:232.32px;font-size:11.20px;width:145.6px;overflow:hidden">Montmollin</div><div style="position:absolute;left:0px;top:245.79999999999995px;width:551px;height:16.2px;background:#fff;border-bottom:1px dotted #cdd1d6;box-sizing:border-box"></div><div class="tx" style="left:4px;top:247.92px;font-size:11.20px;width:61.6px;overflow:hidden">116561</div><div style="position:absolute;left:59px;top:245.79999999999995px;width:0px;height:16.2px;border-left:1px dotted #cdd1d6"></div><div class="tx" style="left:64px;top:247.92px;font-size:11.20px;width:211.6px;overflow:hidden">Renaud Lea</div><div style="position:absolute;left:253px;top:245.79999999999995px;width:0px;height:16.2px;border-left:1px dotted #cdd1d6"></div><div style="position:absolute;left:355px;top:245.79999999999995px;width:0px;height:16.2px;border-left:1px dotted #cdd1d6"></div><div class="tx" style="left:360px;top:247.92px;font-size:11.20px;width:61.6px;overflow:hidden">2016</div><div style="position:absolute;left:415px;top:245.79999999999995px;width:0px;height:16.2px;border-left:1px dotted #cdd1d6"></div><div class="tx" style="left:420px;top:247.92px;font-size:11.20px;width:145.6px;overflow:hidden">Cortaillod</div><div style="position:absolute;left:0px;top:262.0px;width:551px;height:16.2px;background:#edf1f7;border-bottom:1px dotted #cdd1d6;box-sizing:border-box"></div><div class="tx" style="left:4px;top:264.12px;font-size:11.20px;width:61.6px;overflow:hidden">116675</div><div style="position:absolute;left:59px;top:262.0px;width:0px;height:16.2px;border-left:1px dotted #cdd1d6"></div><div class="tx" style="left:64px;top:264.12px;font-size:11.20px;width:211.6px;overflow:hidden">Guggino Maria</div><div style="position:absolute;left:253px;top:262.0px;width:0px;height:16.2px;border-left:1px dotted #cdd1d6"></div><div style="position:absolute;left:355px;top:262.0px;width:0px;height:16.2px;border-left:1px dotted #cdd1d6"></div><div class="tx" style="left:360px;top:264.12px;font-size:11.20px;width:61.6px;overflow:hidden">2016</div><div style="position:absolute;left:415px;top:262.0px;width:0px;height:16.2px;border-left:1px dotted #cdd1d6"></div><div class="tx" style="left:420px;top:264.12px;font-size:11.20px;width:145.6px;overflow:hidden">Cortaillod</div><div style="position:absolute;left:0px;top:278.2px;width:551px;height:16.2px;background:#fff;border-bottom:1px dotted #cdd1d6;box-sizing:border-box"></div><div class="tx" style="left:4px;top:280.32px;font-size:11.20px;width:61.6px;overflow:hidden">116782</div><div style="position:absolute;left:59px;top:278.2px;width:0px;height:16.2px;border-left:1px dotted #cdd1d6"></div><div class="tx" style="left:64px;top:280.32px;font-size:11.20px;width:211.6px;overflow:hidden">Allemann Andrea</div><div style="position:absolute;left:253px;top:278.2px;width:0px;height:16.2px;border-left:1px dotted #cdd1d6"></div><div style="position:absolute;left:355px;top:278.2px;width:0px;height:16.2px;border-left:1px dotted #cdd1d6"></div><div class="tx" style="left:360px;top:280.32px;font-size:11.20px;width:61.6px;overflow:hidden">2000</div><div style="position:absolute;left:415px;top:278.2px;width:0px;height:16.2px;border-left:1px dotted #cdd1d6"></div><div class="tx" style="left:420px;top:280.32px;font-size:11.20px;width:145.6px;overflow:hidden">Neuchâtel</div><div style="position:absolute;left:0px;top:294.4px;width:551px;height:16.2px;background:#edf1f7;border-bottom:1px dotted #cdd1d6;box-sizing:border-box"></div><div class="tx" style="left:4px;top:296.52px;font-size:11.20px;width:61.6px;overflow:hidden">116860</div><div style="position:absolute;left:59px;top:294.4px;width:0px;height:16.2px;border-left:1px dotted #cdd1d6"></div><div class="tx" style="left:64px;top:296.52px;font-size:11.20px;width:211.6px;overflow:hidden">Veillard Geneviève</div><div style="position:absolute;left:253px;top:294.4px;width:0px;height:16.2px;border-left:1px dotted #cdd1d6"></div><div style="position:absolute;left:355px;top:294.4px;width:0px;height:16.2px;border-left:1px dotted #cdd1d6"></div><div class="tx" style="left:360px;top:296.52px;font-size:11.20px;width:61.6px;overflow:hidden">2072</div><div style="position:absolute;left:415px;top:294.4px;width:0px;height:16.2px;border-left:1px dotted #cdd1d6"></div><div class="tx" style="left:420px;top:296.52px;font-size:11.20px;width:145.6px;overflow:hidden">St-Blaise</div><div style="position:absolute;left:0px;top:310.59999999999997px;width:551px;height:16.2px;background:#fff;border-bottom:1px dotted #cdd1d6;box-sizing:border-box"></div><div class="tx" style="left:4px;top:312.72px;font-size:11.20px;width:61.6px;overflow:hidden">117249</div><div style="position:absolute;left:59px;top:310.59999999999997px;width:0px;height:16.2px;border-left:1px dotted #cdd1d6"></div><div class="tx" style="left:64px;top:312.72px;font-size:11.20px;width:211.6px;overflow:hidden">Swoboda Erica</div><div style="position:absolute;left:253px;top:310.59999999999997px;width:0px;height:16.2px;border-left:1px dotted #cdd1d6"></div><div style="position:absolute;left:355px;top:310.59999999999997px;width:0px;height:16.2px;border-left:1px dotted #cdd1d6"></div><div class="tx" style="left:360px;top:312.72px;font-size:11.20px;width:61.6px;overflow:hidden">2000</div><div style="position:absolute;left:415px;top:310.59999999999997px;width:0px;height:16.2px;border-left:1px dotted #cdd1d6"></div><div class="tx" style="left:420px;top:312.72px;font-size:11.20px;width:145.6px;overflow:hidden">Neuchâtel</div><div style="position:absolute;left:0px;top:326.8px;width:551px;height:16.2px;background:#edf1f7;border-bottom:1px dotted #cdd1d6;box-sizing:border-box"></div><div class="tx" style="left:4px;top:328.92px;font-size:11.20px;width:61.6px;overflow:hidden">117307</div><div style="position:absolute;left:59px;top:326.8px;width:0px;height:16.2px;border-left:1px dotted #cdd1d6"></div><div class="tx" style="left:64px;top:328.92px;font-size:11.20px;width:211.6px;overflow:hidden">Besson Micheline</div><div style="position:absolute;left:253px;top:326.8px;width:0px;height:16.2px;border-left:1px dotted #cdd1d6"></div><div style="position:absolute;left:355px;top:326.8px;width:0px;height:16.2px;border-left:1px dotted #cdd1d6"></div><div class="tx" style="left:360px;top:328.92px;font-size:11.20px;width:61.6px;overflow:hidden">2035</div><div style="position:absolute;left:415px;top:326.8px;width:0px;height:16.2px;border-left:1px dotted #cdd1d6"></div><div class="tx" style="left:420px;top:328.92px;font-size:11.20px;width:145.6px;overflow:hidden">Corcelles NE</div><div style="position:absolute;left:0px;top:343.0px;width:551px;height:16.2px;background:#fff;border-bottom:1px dotted #cdd1d6;box-sizing:border-box"></div><div class="tx" style="left:4px;top:345.12px;font-size:11.20px;width:61.6px;overflow:hidden">117308</div><div style="position:absolute;left:59px;top:343.0px;width:0px;height:16.2px;border-left:1px dotted #cdd1d6"></div><div class="tx" style="left:64px;top:345.12px;font-size:11.20px;width:211.6px;overflow:hidden">Baillods Alice</div><div style="position:absolute;left:253px;top:343.0px;width:0px;height:16.2px;border-left:1px dotted #cdd1d6"></div><div style="position:absolute;left:355px;top:343.0px;width:0px;height:16.2px;border-left:1px dotted #cdd1d6"></div><div class="tx" style="left:360px;top:345.12px;font-size:11.20px;width:61.6px;overflow:hidden">2000</div><div style="position:absolute;left:415px;top:343.0px;width:0px;height:16.2px;border-left:1px dotted #cdd1d6"></div><div class="tx" style="left:420px;top:345.12px;font-size:11.20px;width:145.6px;overflow:hidden">Neuchâtel</div><div style="position:absolute;left:0px;top:359.2px;width:551px;height:16.2px;background:#edf1f7;border-bottom:1px dotted #cdd1d6;box-sizing:border-box"></div><div class="tx" style="left:4px;top:361.32px;font-size:11.20px;width:61.6px;overflow:hidden">117433</div><div style="position:absolute;left:59px;top:359.2px;width:0px;height:16.2px;border-left:1px dotted #cdd1d6"></div><div class="tx" style="left:64px;top:361.32px;font-size:11.20px;width:211.6px;overflow:hidden">Zehtner Willi</div><div style="position:absolute;left:253px;top:359.2px;width:0px;height:16.2px;border-left:1px dotted #cdd1d6"></div><div style="position:absolute;left:355px;top:359.2px;width:0px;height:16.2px;border-left:1px dotted #cdd1d6"></div><div class="tx" style="left:360px;top:361.32px;font-size:11.20px;width:61.6px;overflow:hidden">2000</div><div style="position:absolute;left:415px;top:359.2px;width:0px;height:16.2px;border-left:1px dotted #cdd1d6"></div><div class="tx" style="left:420px;top:361.32px;font-size:11.20px;width:145.6px;overflow:hidden">Neuchâtel</div><div style="position:absolute;left:0px;top:375.4px;width:551px;height:16.2px;background:#fff;border-bottom:1px dotted #cdd1d6;box-sizing:border-box"></div><div class="tx" style="left:4px;top:377.52px;font-size:11.20px;width:61.6px;overflow:hidden">117481</div><div style="position:absolute;left:59px;top:375.4px;width:0px;height:16.2px;border-left:1px dotted #cdd1d6"></div><div class="tx" style="left:64px;top:377.52px;font-size:11.20px;width:211.6px;overflow:hidden">Mueller Yvette</div><div style="position:absolute;left:253px;top:375.4px;width:0px;height:16.2px;border-left:1px dotted #cdd1d6"></div><div style="position:absolute;left:355px;top:375.4px;width:0px;height:16.2px;border-left:1px dotted #cdd1d6"></div><div class="tx" style="left:360px;top:377.52px;font-size:11.20px;width:61.6px;overflow:hidden">2000</div><div style="position:absolute;left:415px;top:375.4px;width:0px;height:16.2px;border-left:1px dotted #cdd1d6"></div><div class="tx" style="left:420px;top:377.52px;font-size:11.20px;width:145.6px;overflow:hidden">Neuchâtel</div><div style="position:absolute;left:0px;top:391.59999999999997px;width:551px;height:16.2px;background:#edf1f7;border-bottom:1px dotted #cdd1d6;box-sizing:border-box"></div><div class="tx" style="left:4px;top:393.72px;font-size:11.20px;width:61.6px;overflow:hidden">117575</div><div style="position:absolute;left:59px;top:391.59999999999997px;width:0px;height:16.2px;border-left:1px dotted #cdd1d6"></div><div class="tx" style="left:64px;top:393.72px;font-size:11.20px;width:211.6px;overflow:hidden">Guinchard Charles</div><div style="position:absolute;left:253px;top:391.59999999999997px;width:0px;height:16.2px;border-left:1px dotted #cdd1d6"></div><div style="position:absolute;left:355px;top:391.59999999999997px;width:0px;height:16.2px;border-left:1px dotted #cdd1d6"></div><div class="tx" style="left:360px;top:393.72px;font-size:11.20px;width:61.6px;overflow:hidden">2000</div><div style="position:absolute;left:415px;top:391.59999999999997px;width:0px;height:16.2px;border-left:1px dotted #cdd1d6"></div><div class="tx" style="left:420px;top:393.72px;font-size:11.20px;width:145.6px;overflow:hidden">Neuchâtel</div></div><div style="position:absolute;left:874px;top:53px;width:16px;height:398px;background:#fff;border-left:1px solid #c9c9c9;box-sizing:border-box"></div><div style="position:absolute;left:875px;top:69px;width:15px;height:64px;background:#dadada;border-top:1px solid #c4c4c4;box-sizing:border-box"></div><svg style="position:absolute;left:875px;top:53px" width="15" height="16"><path d="M4.5 10 L8 6.5 L11.5 10" fill="none" stroke="#505050" stroke-width="1.4"/></svg><svg style="position:absolute;left:875px;top:435px" width="15" height="16"><path d="M4.5 6.5 L8 10 L11.5 6.5" fill="none" stroke="#505050" stroke-width="1.4"/></svg><div style="position:absolute;left:875px;top:435px;width:15px;height:1px;background:#d8d8d8"></div><div style="position:absolute;left:880px;top:96.5px;width:7px;height:1.6px;background:#6a6a6a"></div><div style="position:absolute;left:880px;top:99.5px;width:7px;height:1.6px;background:#6a6a6a"></div><div style="position:absolute;left:880px;top:102.5px;width:7px;height:1.6px;background:#6a6a6a"></div><div style="position:absolute;left:324px;top:451px;width:566px;height:17px;background:#c9d3e1;border-top:1px solid #b5bfcc;box-sizing:border-box"></div><div class="tx" style="left:327.7px;top:453.52px;font-size:11.20px;transform:scaleX(0.935)">Enregistrement/de</div><div style="position:absolute;left:458px;top:452px;width:41px;height:15px;background:#fff;border:1px solid #a9b3c0;box-sizing:border-box"></div><div class="tx" style="left:484px;top:453.52px;font-size:11.20px;">14</div><div style="position:absolute;left:497.5px;top:453px;width:1px;height:13px;background:#000"></div><div class="tx" style="left:501px;top:453.52px;font-size:11.20px;">130</div><div style="position:absolute;left:562px;top:452px;width:328px;height:15.5px;background:#fff"></div><svg style="position:absolute;left:420px;top:453px" width="140" height="14"><rect x="4.2" y="2.5" width="1.6" height="8" fill="#3f4a5a"/><path d="M11.5 2.5 L6.5 6.5 L11.5 10.5 Z" fill="#3f4a5a"/><path d="M30 2.5 L25.5 6.5 L30 10.5 Z" fill="#3f4a5a"/><path d="M111 2.5 L115.5 6.5 L111 10.5 Z" fill="#3f4a5a"/><path d="M128 2.5 L133 6.5 L128 10.5 Z" fill="#3f4a5a"/><rect x="134.2" y="2.5" width="1.6" height="8" fill="#3f4a5a"/></svg><div style="position:absolute;left:12px;top:480.4px;width:291px;height:141.6px;border:1px solid #bcc5d2;border-radius:3px;box-sizing:border-box"></div><div style="position:absolute;left:20.6px;top:478.4px;width:48.8px;height:5px;background:#ddeafc"></div><div class="tx" style="left:23px;top:475.72px;font-size:11.20px;">Sélection</div><div class="tx" style="left:89.6px;top:496.52px;font-size:11.20px;">Inclu modif-A :</div><div style="position:absolute;left:155px;top:494.3px;width:12.5px;height:13px;border:1px solid #e8c878;box-sizing:border-box;background:linear-gradient(#f6f8fb,#e4e8ef)"></div><svg style="position:absolute;left:155px;top:494.3px" width="12" height="13"><path d="M3 5.7 L5.3 8.8 L9.5 3.6" fill="none" stroke="#2268c0" stroke-width="2"/></svg><div class="tx" style="left:89.6px;top:518.52px;font-size:11.20px;">Inclu modif-C :</div><div style="position:absolute;left:155px;top:516px;width:12.5px;height:13px;border:1px solid #e8c878;box-sizing:border-box;background:linear-gradient(#f6f8fb,#e4e8ef)"></div><svg style="position:absolute;left:155px;top:516px" width="12" height="13"><path d="M3 5.7 L5.3 8.8 L9.5 3.6" fill="none" stroke="#2268c0" stroke-width="2"/></svg><div class="tx" style="left:60.4px;top:561.02px;font-size:11.20px;">salarié :</div><div style="position:absolute;left:107px;top:556.5px;width:131px;height:18.5px;background:#fff;border:1px solid #98a6b8;box-sizing:border-box"></div><div style="position:absolute;left:224px;top:557.5px;width:13px;height:16.5px;background:linear-gradient(#f4f5f8,#eceef3 40%,#c8cfda);border-left:1px solid #aab5c4;box-sizing:border-box"></div><svg style="position:absolute;left:224px;top:557.5px" width="13" height="16.5"><path d="M4.0 7.25 L9.0 7.25 L6.5 10.05 Z" fill="#2f3d58"/></svg><div class="tx" style="left:110px;top:560.27px;font-size:11.20px;transform:scaleX(0.95)">Tous</div><div style="position:absolute;left:323px;top:480.4px;width:569px;height:71.6px;border:1px solid #bcc5d2;border-radius:3px;box-sizing:border-box"></div><div style="position:absolute;left:330.90000000000003px;top:478.4px;width:48.8px;height:5px;background:#ddeafc"></div><div class="tx" style="left:333.3px;top:475.72px;font-size:11.20px;">Sélection</div><div class="tx" style="left:338.3px;top:495.52px;font-size:11.20px;">du</div><svg style="position:absolute;left:350px;top:494px" width="10" height="12"><path d="M3 11 L7.6 1.6" stroke="#1a1a1a" stroke-width="1.15"/></svg><div class="tx" style="left:359.6px;top:495.52px;font-size:11.20px;">au</div><div class="tx" style="left:374.9px;top:495.52px;font-size:11.20px;">:</div><div style="position:absolute;left:421.5px;top:490.5px;width:82px;height:19px;background:#fff;border:1px solid #98a6b8;box-sizing:border-box"></div><div style="position:absolute;left:489.5px;top:491.5px;width:13px;height:17px;background:linear-gradient(#f4f5f8,#eceef3 40%,#c8cfda);border-left:1px solid #aab5c4;box-sizing:border-box"></div><svg style="position:absolute;left:489.5px;top:491.5px" width="13" height="17"><path d="M4.0 7.5 L9.0 7.5 L6.5 10.3 Z" fill="#2f3d58"/></svg><div style="position:absolute;left:526.5px;top:490.5px;width:85px;height:19px;background:#fff;border:1px solid #98a6b8;box-sizing:border-box"></div><div style="position:absolute;left:597.5px;top:491.5px;width:13px;height:17px;background:linear-gradient(#f4f5f8,#eceef3 40%,#c8cfda);border-left:1px solid #aab5c4;box-sizing:border-box"></div><svg style="position:absolute;left:597.5px;top:491.5px" width="13" height="17"><path d="M4.0 7.5 L9.0 7.5 L6.5 10.3 Z" fill="#2f3d58"/></svg><div style="position:absolute;left:425px;top:493px;width:11px;height:14px;background:#3399ff"></div><div class="tx" style="left:425.5px;top:494.52px;font-size:11.20px;color:#fff;-webkit-text-stroke:0.12px #fff">19</div><div class="tx" style="left:437.3px;top:494.52px;font-size:11.20px;">.</div><div class="tx" style="left:440.6px;top:494.52px;font-size:11.20px;">02</div><div class="tx" style="left:453.5px;top:494.52px;font-size:11.20px;">.</div><div class="tx" style="left:456.2px;top:494.52px;font-size:11.20px;transform:scaleX(0.95)">2016</div><div class="tx" style="left:530.5px;top:494.52px;font-size:11.20px;">19</div><div class="tx" style="left:542.3px;top:494.52px;font-size:11.20px;">.</div><div class="tx" style="left:545.6px;top:494.52px;font-size:11.20px;">02</div><div class="tx" style="left:558.5px;top:494.52px;font-size:11.20px;">.</div><div class="tx" style="left:561.2px;top:494.52px;font-size:11.20px;transform:scaleX(0.95)">2016</div><div class="tx" style="left:338.3px;top:520.52px;font-size:11.20px;">continu</div><div class="tx" style="left:374.9px;top:520.52px;font-size:11.20px;">:</div><div style="position:absolute;left:417.8px;top:517.7px;width:12.5px;height:13px;border:1px solid #e8c878;box-sizing:border-box;background:linear-gradient(#f6f8fb,#e4e8ef)"></div><svg style="position:absolute;left:417.8px;top:517.7px" width="12" height="13"><path d="M3 5.7 L5.3 8.8 L9.5 3.6" fill="none" stroke="#2268c0" stroke-width="2"/></svg><svg style="position:absolute;left:626px;top:492.5px" width="13" height="13"><circle cx="6.5" cy="6.5" r="5.6" fill="#f6f8fb" stroke="#e3c27c" stroke-width="1"/></svg><div class="tx" style="left:643.3px;top:495.72px;font-size:11.20px;">vue salarié</div><svg style="position:absolute;left:626px;top:529px" width="13" height="13"><circle cx="6.5" cy="6.5" r="5.6" fill="#f6f8fb" stroke="#e3c27c" stroke-width="1"/><circle cx="6.5" cy="6.5" r="2.4" fill="#2a62c0"/></svg><div class="tx" style="left:643.3px;top:531.52px;font-size:11.20px;">vue clients</div><div style="position:absolute;left:716px;top:527px;width:171px;height:18.5px;background:#fff;border:1px solid #98a6b8;box-sizing:border-box"></div><div style="position:absolute;left:873px;top:528px;width:13px;height:16.5px;background:linear-gradient(#f4f5f8,#eceef3 40%,#c8cfda);border-left:1px solid #aab5c4;box-sizing:border-box"></div><svg style="position:absolute;left:873px;top:528px" width="13" height="16.5"><path d="M4.0 7.25 L9.0 7.25 L6.5 10.05 Z" fill="#2f3d58"/></svg><div class="tx" style="left:719px;top:530.77px;font-size:11.20px;transform:scaleX(0.86)">Alle Klienten</div><div style="position:absolute;left:323px;top:566px;width:569px;height:57px;border:1px solid #bcc5d2;border-radius:3px;box-sizing:border-box"></div><div style="position:absolute;left:384.5px;top:571.2px;width:219px;height:19.5px;background:linear-gradient(#f0f2f7 0%,#eceff4 45%,#dcdfe8 58%,#c3cad6 100%);border:1px solid #8e9bb0;border-radius:2px;box-sizing:border-box"></div><div class="tx" style="left:483.5px;top:575.52px;font-size:11.20px;">Imprimer</div><div style="position:absolute;left:484px;top:586px;width:3px;height:1px;background:#000"></div><svg style="position:absolute;left:463px;top:572px" width="18" height="17"><defs><linearGradient id="pp" x1="0" y1="0" x2="1" y2="1"><stop offset="0" stop-color="#d8ecff"/><stop offset="1" stop-color="#4c8fe0"/></linearGradient><linearGradient id="pr" x1="0" y1="0" x2="0" y2="1"><stop offset="0" stop-color="#f4f4f4"/><stop offset="1" stop-color="#8d8f92"/></linearGradient></defs><path d="M2.5 1.5 L5.5 6" stroke="#8fb6e6" stroke-width="1.5"/><rect x="6.2" y="1.7" width="9.3" height="11.3" fill="url(#pp)" stroke="#3a68ad" stroke-width="1"/><rect x="1.2" y="7.2" width="9.6" height="7.6" rx="3" fill="url(#pr)" stroke="#6f7274" stroke-width="1"/><path d="M2.5 10.5 L9.5 10.5" stroke="#ffffff" stroke-width="0.8"/></svg><div style="position:absolute;left:648.5px;top:572px;width:109px;height:18.5px;background:#fce7a5;border:1px solid #e3c56c;border-radius:2px;box-sizing:border-box"></div><div class="tx" style="left:695px;top:575.52px;font-size:11.20px;">Aperçu</div><div style="position:absolute;left:695px;top:586px;width:6px;height:1px;background:#000"></div><svg style="position:absolute;left:675px;top:572px" width="17" height="17"><defs><linearGradient id="ap" x1="0" y1="0" x2="1" y2="1"><stop offset="0" stop-color="#e6f3ff"/><stop offset="1" stop-color="#6ea6e6"/></linearGradient><radialGradient id="al" cx="0.4" cy="0.35" r="0.7"><stop offset="0" stop-color="#ffffff"/><stop offset="1" stop-color="#7cc4ea"/></radialGradient><linearGradient id="ab" x1="0" y1="0" x2="0" y2="1"><stop offset="0" stop-color="#f0f0f8"/><stop offset="1" stop-color="#7c7ca0"/></linearGradient></defs><rect x="4.5" y="1.5" width="9.5" height="10.5" fill="url(#ap)" stroke="#4a7cc0" stroke-width="1"/><ellipse cx="10.5" cy="13" rx="5" ry="2.8" fill="url(#ab)" stroke="#66668a" stroke-width="0.9"/><circle cx="8" cy="8.2" r="4.1" fill="url(#al)" stroke="#3d6d98" stroke-width="1.2"/><path d="M5.2 11.3 L1.6 15.2" stroke="#c0702a" stroke-width="2"/></svg><div style="position:absolute;left:776.5px;top:571.5px;width:110px;height:19px;background:linear-gradient(#f0f2f7 0%,#eceff4 45%,#dcdfe8 58%,#c3cad6 100%);border:1px solid #8e9bb0;border-radius:2px;box-sizing:border-box"></div><div class="tx" style="left:825px;top:575.52px;font-size:11.20px;">Fermer</div><div style="position:absolute;left:825px;top:586px;width:5.5px;height:1px;background:#000"></div><svg style="position:absolute;left:804px;top:572.5px" width="15" height="15"><defs><radialGradient id="fr" cx="0.45" cy="0.3" r="0.75"><stop offset="0" stop-color="#ff6a6a"/><stop offset="0.6" stop-color="#dd1a1a"/><stop offset="1" stop-color="#a80808"/></radialGradient></defs><circle cx="7.3" cy="7" r="6.7" fill="url(#fr)" stroke="#a01010" stroke-width="0.6"/><path d="M4.6 4.3 L10 9.7 M10 4.3 L4.6 9.7" stroke="#fff" stroke-width="1.6"/></svg><div class="tx" style="left:330px;top:599.52px;font-size:11.20px;">Imprimante</div><div style="position:absolute;left:384.5px;top:598px;width:219px;height:19px;background:#fff;border:1px solid #98a6b8;box-sizing:border-box"></div><div style="position:absolute;left:589.5px;top:599px;width:13px;height:17px;background:linear-gradient(#f4f5f8,#eceef3 40%,#c8cfda);border-left:1px solid #aab5c4;box-sizing:border-box"></div><svg style="position:absolute;left:589.5px;top:599px" width="13" height="17"><path d="M4.0 7.5 L9.0 7.5 L6.5 10.3 Z" fill="#2f3d58"/></svg><div style="position:absolute;left:386px;top:600px;width:203px;height:15px;overflow:hidden"><div class="tx" style="left:2px;top:2.52px;font-size:11.20px;transform:scaleX(0.905)">RICOH MP C7500 PCL 6 auf domissrv01 (um</div></div><div class="tx" style="left:611.7px;top:603.02px;font-size:11.20px;word-spacing:0.8px">format page :</div><div style="position:absolute;left:690px;top:598.5px;width:109.5px;height:18.5px;background:#fff;border:1px solid #98a6b8;box-sizing:border-box"></div><div style="position:absolute;left:785.5px;top:599.5px;width:13px;height:16.5px;background:linear-gradient(#f4f5f8,#eceef3 40%,#c8cfda);border-left:1px solid #aab5c4;box-sizing:border-box"></div><svg style="position:absolute;left:785.5px;top:599.5px" width="13" height="16.5"><path d="M4.0 7.25 L9.0 7.25 L6.5 10.05 Z" fill="#2f3d58"/></svg><div class="tx" style="left:693px;top:602.27px;font-size:11.20px;transform:scaleX(0.92)">A4-Hoch</div><div style="position:absolute;left:802.5px;top:598.2px;width:19px;height:19px;background:linear-gradient(#f0f2f7 0%,#eceff4 45%,#dcdfe8 58%,#c3cad6 100%);border:1px solid #8e9bb0;border-radius:2px;box-sizing:border-box"></div><div class="tx" style="left:806.5px;top:602.52px;font-size:11.20px;">...</div><div style="position:absolute;left:311px;top:27px;width:1px;height:600px;background:#9098a0"></div><div style="position:absolute;left:312px;top:27px;width:2px;height:600px;background:#6a727a"></div></div></body></html>
